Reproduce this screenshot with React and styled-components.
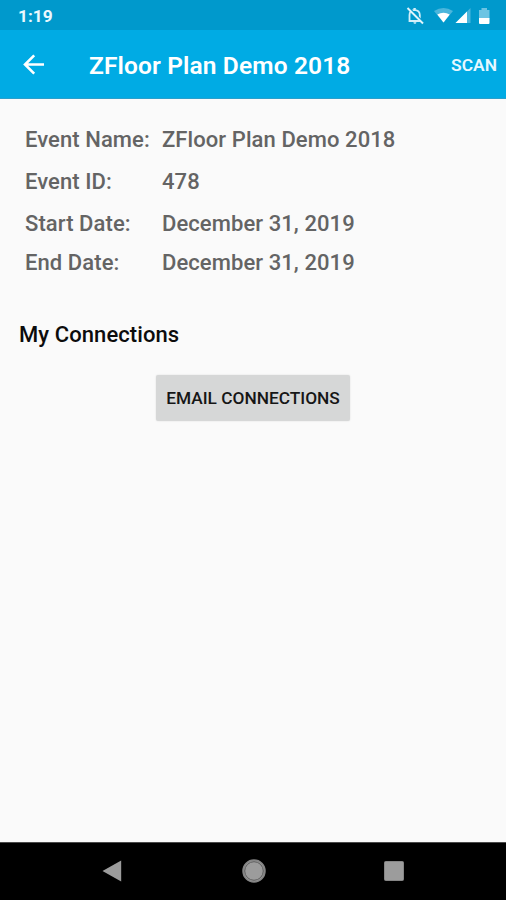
import React from 'react';
import styled, { createGlobalStyle } from 'styled-components';

const GlobalStyle = createGlobalStyle`
  * {
    box-sizing: border-box;
  }

  body {
    margin: 0;
    font-family: Roboto, sans-serif;
    background: #fafafa;
  }
`;

const Screen = styled.div`
  display: flex;
  flex-direction: column;
  width: 100%;
  height: 100vh;
  background: #fafafa;
  overflow: hidden;
`;

const StatusBar = styled.div`
  display: flex;
  justify-content: space-between;
  align-items: center;
  height: 30px;
  padding: 2px 15px 0 18px;
  background: #0099cc;
  color: #eaf8fd;
`;

const Clock = styled.span`
  font-size: 17.3px;
  font-weight: 700;
  line-height: 20px;
`;

const Toolbar = styled.header`
  display: flex;
  align-items: center;
  height: 69px;
  padding: 1px 9px 0 19px;
  background: #00abe4;
  border-bottom: 1px solid #2a9fcb;
  color: #fff;
`;

const IconButton = styled.button`
  display: flex;
  padding: 0;
  border: 0;
  background: none;
  color: inherit;
`;

const Title = styled.h1`
  flex: 1;
  margin: 2px 0 0 40px;
  font-size: 24.5px;
  font-weight: 600;
  letter-spacing: 0.13px;
  line-height: 32px;
  white-space: nowrap;
`;

const ScanButton = styled.button`
  padding: 0;
  border: 0;
  background: none;
  color: #e6f8ff;
  font-family: inherit;
  font-size: 17.4px;
  font-weight: 600;
`;

const Content = styled.main`
  flex: 1;
  padding: 20px 19px 0;
`;

const Details = styled.dl`
  display: grid;
  grid-template-columns: 137px 1fr;
  grid-template-rows: 42px 42px 39px 41px;
  margin: 0 0 0 6px;
  color: #646464;
  font-size: 22px;
  font-weight: 500;
  letter-spacing: 0.08px;
  line-height: 42px;
  white-space: nowrap;
`;

const Label = styled.dt`
  margin: 0;
`;

const Value = styled.dd`
  margin: 0;
`;

const SectionTitle = styled.h2`
  margin: 37px 0 0;
  color: #0c0c0c;
  font-size: 22px;
  font-weight: 500;
  letter-spacing: 0.08px;
  line-height: 30px;
`;

const EmailButton = styled.button`
  display: block;
  width: 194px;
  height: 46px;
  margin: 25px auto 0;
  padding: 0;
  border: 0;
  border-radius: 2px;
  background: #d6d7d7;
  box-shadow: 0 0 2px rgba(0, 0, 0, 0.12);
  color: #161616;
  font-family: inherit;
  font-size: 17.3px;
  font-weight: 500;
  white-space: nowrap;
`;

const NavBar = styled.nav`
  display: flex;
  justify-content: space-between;
  align-items: center;
  height: 58px;
  padding: 0 102px 2px 101px;
  background: #000;
  border-top: 1px solid #4a4a4a;
`;

const StatusIcons = () => (
  <svg width="86" height="20" viewBox="405 6 86 20" fill="none">
    {/* notifications off */}
    <path d="M409.5 21v-6c0-3 1.7-4.8 5-5.2 3.6.4 5.3 2.2 5.3 5.2v4.8l1.2 1.2z" stroke="#d5eff9" strokeWidth="1.8" />
    <path d="M413.4 22.3h3a1.5 1.5 0 0 1-3 0zM413.4 9.5V8h2.4v1.5z" fill="#d5eff9" />
    <path d="M408.5 8l15 15" stroke="#0099cc" strokeWidth="2.5" />
    <path d="M407.5 8l15.5 15.5" stroke="#e0f4fb" strokeWidth="2" />
    {/* wifi */}
    <path d="M434 11q9.500-6 19 0L443.500 22.500z" fill="#4bb6dc" />
    <path d="M437.300 14.500q6.200-3.600 12.400 0L443.500 22.500z" fill="#fff" />
    {/* signal */}
    <path d="M455.500 23L470.500 8V23z" fill="#4bb6dc" />
    <path d="M455.500 23L467 11.500V23z" fill="#fff" />
    {/* battery */}
    <path d="M479 10h2.500V8h5.500v2h2.500V18.500H479z" fill="#6cc4e3" />
    <path d="M479 18h10.500v5q0 1-1 1h-8.500q-1 0-1-1z" fill="#fff" />
  </svg>
);

const BackArrow = () => (
  <svg width="30" height="30" viewBox="0 0 30 30" fill="none">
    <path d="M25 14.500H6.500M15.200 5.300L6 14.500l9.200 9.200" stroke="currentColor" strokeWidth="2.600" />
  </svg>
);

const NavBack = () => (
  <svg width="22" height="24" viewBox="0 0 22 24">
    <path d="M1.500 12L20.200 1.500v21z" fill="#9c9c9c" />
  </svg>
);

const NavHome = () => (
  <svg width="26" height="26" viewBox="0 0 26 26">
    <circle cx="13" cy="13" r="11" fill="#9c9c9c" stroke="#858585" strokeWidth="1.500" />
    <circle cx="13" cy="13" r="9.300" fill="none" stroke="#555" strokeWidth="0.900" />
  </svg>
);

const NavRecent = () => (
  <svg width="20" height="20" viewBox="0 0 20 20">
    <rect x="0.500" y="0.500" width="19" height="19" rx="1" fill="#9c9c9c" stroke="#858585" />
  </svg>
);

const details = [
  { label: 'Event Name:', value: 'ZFloor Plan Demo 2018' },
  { label: 'Event ID:', value: '478' },
  { label: 'Start Date:', value: 'December 31, 2019' },
  { label: 'End Date:', value: 'December 31, 2019' },
];

const App = () => {
  return (
    <>
      <GlobalStyle />
      <Screen>
        <StatusBar>
          <Clock>1:19</Clock>
          <StatusIcons />
        </StatusBar>
        <Toolbar>
          <IconButton aria-label="Back">
            <BackArrow />
          </IconButton>
          <Title>ZFloor Plan Demo 2018</Title>
          <ScanButton>SCAN</ScanButton>
        </Toolbar>
        <Content>
          <Details>
            {details.map(({ label, value }) => (
              <React.Fragment key={label}>
                <Label>{label}</Label>
                <Value>{value}</Value>
              </React.Fragment>
            ))}
          </Details>
          <SectionTitle>My Connections</SectionTitle>
          <EmailButton>EMAIL CONNECTIONS</EmailButton>
        </Content>
        <NavBar>
          <NavBack />
          <NavHome />
          <NavRecent />
        </NavBar>
      </Screen>
    </>
  );
};

export default App;
